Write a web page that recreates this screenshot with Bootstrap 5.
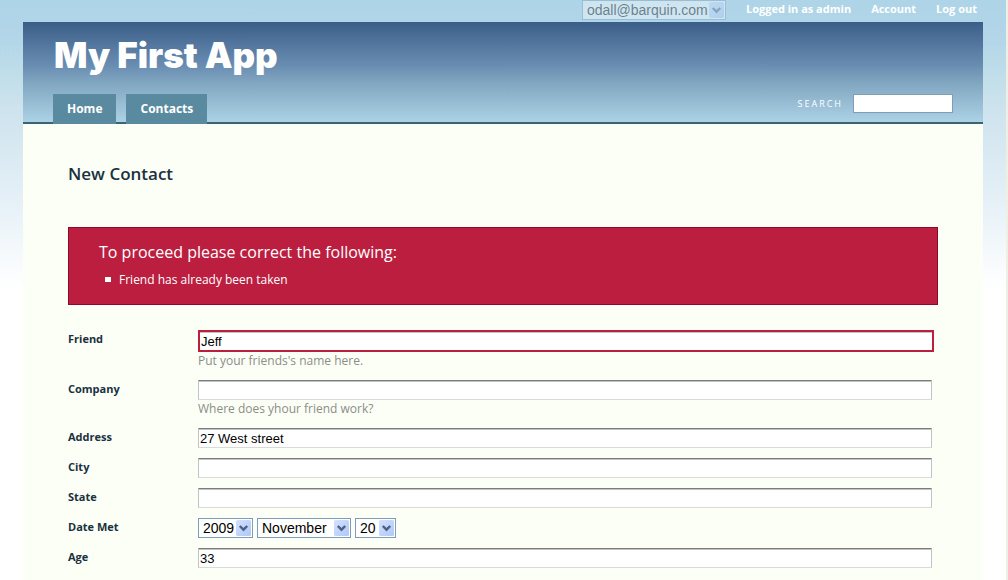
<!DOCTYPE html>
<html lang="en">
<head>
<meta charset="utf-8">
<meta name="viewport" content="width=device-width, initial-scale=1">
<title>My First App - New Contact</title>
<link href="https://cdn.jsdelivr.net/npm/bootstrap@5.3.0/dist/css/bootstrap.min.css" rel="stylesheet">
<style>
  body {
    background: #fff linear-gradient(#aed4e7 0, #b3d6e8 40px, #c4e0ea 85px, #cee3ee 110px, #e5f0f7 200px, #fff 288px) no-repeat;
    border-right: 2px solid #f0efe6;
    font-family: "Open Sans", "Noto Sans", sans-serif;
    font-size: 12px;
    line-height: 18px;
    color: #1a3140;
  }
  .shell { max-width: 960px; }
  .topbar { height: 22px; gap: 20px; padding-right: 6px; font-weight: 700; font-size: 11px; }
  .topbar a { color: #fff; line-height: 18px; }
  select {
    appearance: none;
    border: 1px solid #7f9db9;
    border-radius: 0;
    height: 20px;
    padding: 0 17px 0 4px;
    font: 14px/18px "Liberation Sans", sans-serif;
    color: #000;
    background: #fff url("data:image/svg+xml,%3Csvg xmlns='http://www.w3.org/2000/svg' width='15' height='16'%3E%3Cdefs%3E%3ClinearGradient id='g' x2='1' y2='1'%3E%3Cstop stop-color='%23d5e1fd'/%3E%3Cstop offset='1' stop-color='%23aec8f7'/%3E%3C/linearGradient%3E%3C/defs%3E%3Crect width='15' height='16' rx='1.5' fill='url(%23g)'/%3E%3Cpath d='M3.8 6l3.7 3.7L11.2 6' fill='none' stroke='%234d6185' stroke-width='2.4'/%3E%3C/svg%3E") no-repeat right 1px center;
  }
  select.user-pick:disabled { width: 144px; opacity: .4; color: #000; }
  .year-pick { width: 55px; }
  .month-pick { width: 94px; }
  .day-pick { width: 41px; }
  .masthead { background: linear-gradient(#3b5e89, #6b8fb3 45%, #80a5bf 60%, #acd2e6); border-bottom: 2px solid #3c6474; height: 102px; padding: 0 30px; }
  .masthead h1 { font: 900 35px/42px Inter, sans-serif; margin: 12px 0 0 1px; color: #fff; }
  .tabs { gap: 10px; }
  .tabs .nav-link { background: #5a8a9f; color: #fff; font-weight: 700; font-size: 12px; line-height: 18px; padding: 6px 14px; margin-bottom: -2px; height: 30px; }
  .search-form { gap: 10px; margin-bottom: 9px; }
  .search-label { color: #fff; font-size: 9px; letter-spacing: 2px; }
  .search-box { width: 100px; height: 19px; border: 1px solid #7f9db9; background: #fff; }
  .content { background: #fcfff6; padding: 38px 45px 11px; min-height: calc(100vh - 124px); }
  .content h2 { font-size: 17px; line-height: 24px; font-weight: 600; margin-bottom: 41px; }
  .problems { background: #bc1e3f; border: 1px solid #8e0828; color: #fff; padding: 12px 30px 15px; margin-bottom: 25px; }
  .problems h3 { font-size: 16px; line-height: 24px; font-weight: 400; margin-bottom: 7px; }
  .problems ul { list-style: none; }
  .problems li::before { content: ""; display: inline-block; width: 6px; height: 5px; background: #fff; margin: 0 8px 2px 6px; }
  .field-row { padding-right: 6px; margin-bottom: 10px; }
  .field-name { width: 130px; font-weight: 700; font-size: 11px; }
  .field-box { display: block; width: 100%; height: 20px; border: 1px solid; border-color: #7c7c7c #c3c3c3 #dadada #c3c3c3; box-shadow: inset 0 1px #c3c3c3; background: #fff; padding: 0 1px; color: #000; font: 13px/18px "Liberation Sans", sans-serif; }
  .has-problem { padding-right: 4px; }
  .has-problem .field-box { height: 22px; border: 2px solid #bc1e3f; }
  .hint { display: block; color: #8b8d89; font-size: 12px; line-height: 18px; }
</style>
</head>
<body>
<div class="container-fluid shell p-0">
  <div class="topbar d-flex justify-content-end">
    <select class="user-pick" aria-label="Current user" disabled><option>odall@barquin.com</option></select>
    <a class="text-decoration-none" href="#">Logged in as admin</a>
    <a class="text-decoration-none" href="#">Account</a>
    <a class="text-decoration-none" href="#">Log out</a>
  </div>
  <header class="masthead d-flex justify-content-between align-items-end">
    <div class="align-self-stretch d-flex flex-column justify-content-between">
      <h1>My First App</h1>
      <nav class="nav tabs">
        <a class="nav-link" href="#">Home</a>
        <a class="nav-link" href="#">Contacts</a>
      </nav>
    </div>
    <form class="search-form d-flex align-items-center">
      <label class="search-label" for="search">SEARCH</label>
      <input class="search-box" id="search" type="text">
    </form>
  </header>
  <main class="content">
    <h2>New Contact</h2>
    <div class="problems" role="alert">
      <h3>To proceed please correct the following:</h3>
      <ul class="m-0 p-0"><li>Friend has already been taken</li></ul>
    </div>
    <form>
      <div class="field-row has-problem d-flex">
        <label class="field-name flex-shrink-0" for="friend">Friend</label>
        <div class="flex-grow-1"><input class="field-box" id="friend" type="text" value="Jeff"><span class="hint">Put your friends's name here.</span></div>
      </div>
      <div class="field-row d-flex">
        <label class="field-name flex-shrink-0" for="company">Company</label>
        <div class="flex-grow-1"><input class="field-box" id="company" type="text"><span class="hint">Where does yhour friend work?</span></div>
      </div>
      <div class="field-row d-flex">
        <label class="field-name flex-shrink-0" for="address">Address</label>
        <div class="flex-grow-1"><input class="field-box" id="address" type="text" value="27 West street"></div>
      </div>
      <div class="field-row d-flex">
        <label class="field-name flex-shrink-0" for="city">City</label>
        <div class="flex-grow-1"><input class="field-box" id="city" type="text"></div>
      </div>
      <div class="field-row d-flex">
        <label class="field-name flex-shrink-0" for="state">State</label>
        <div class="flex-grow-1"><input class="field-box" id="state" type="text"></div>
      </div>
      <div class="field-row d-flex">
        <label class="field-name flex-shrink-0" for="year">Date Met</label>
        <div class="d-flex gap-1">
          <select class="year-pick" id="year"><option>2009</option></select>
          <select class="month-pick" aria-label="Month"><option>November</option></select>
          <select class="day-pick" aria-label="Day"><option>20</option></select>
        </div>
      </div>
      <div class="field-row d-flex mb-0">
        <label class="field-name flex-shrink-0" for="age">Age</label>
        <div class="flex-grow-1"><input class="field-box" id="age" type="text" value="33"></div>
      </div>
    </form>
  </main>
</div>
<script src="https://cdn.jsdelivr.net/npm/bootstrap@5.3.0/dist/js/bootstrap.bundle.min.js"></script>
</body>
</html>
